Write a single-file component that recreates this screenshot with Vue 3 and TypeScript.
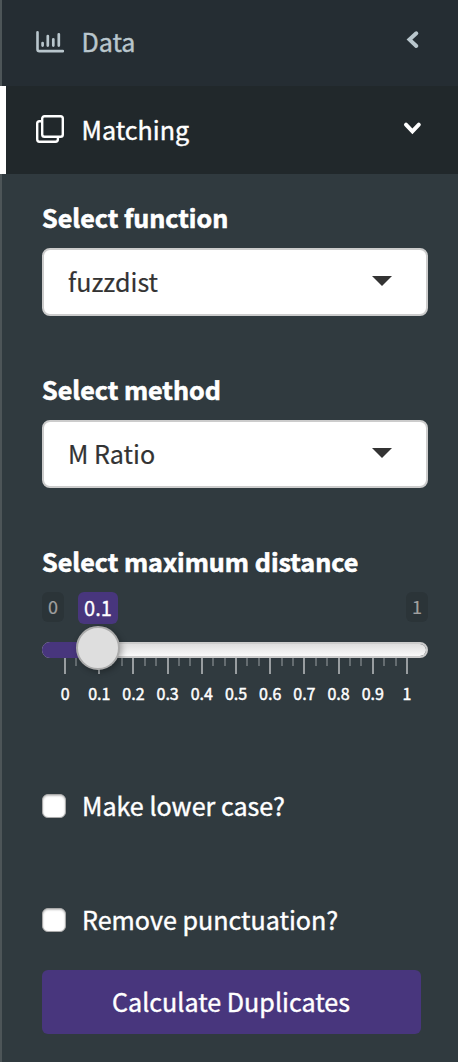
<script setup lang="ts">
import { ref } from 'vue'

interface Tick { x: number; major: boolean }

const selects = [
  { label: 'Select function', value: 'fuzzdist' },
  { label: 'Select method', value: 'M Ratio' },
]
const ticks: Tick[] = Array.from({ length: 31 }, (_, i) => ({
  x: Math.round(22 + i * 11.4),
  major: i % 3 === 0,
}))
const scale = ['0', '0.1', '0.2', '0.3', '0.4', '0.5', '0.6', '0.7', '0.8', '0.9', '1']
const checks = ref([
  { label: 'Make lower case?', on: false },
  { label: 'Remove punctuation?', on: false },
])
</script>

<template>
  <aside class="sidebar">
    <div class="item">
      <svg class="icon" width="28" height="28" viewBox="0 0 28 28" fill="none" stroke="currentColor" stroke-linecap="round">
        <path d="M1.5 3.2V20.2Q1.5 22.1 3.4 22.1H27" stroke-width="2.6" />
        <path d="M6.6 14V16.6M11.8 7V16.6M17.3 10.3V16.6M22.8 5.3V16.6" stroke-width="2.7" />
      </svg>
      <span class="title">Data</span>
      <svg class="arrow" width="20" height="20" viewBox="0 0 20 20" fill="none" stroke="currentColor" stroke-width="4" stroke-linecap="round">
        <path d="M13.3 3.3L6.5 9.6L13.3 16" />
      </svg>
    </div>
    <div class="item active">
      <svg class="icon" width="28" height="28" viewBox="0 0 28 28" fill="none" stroke="currentColor" stroke-width="2.4">
        <rect x="6.2" y="1.2" width="20.6" height="20.6" rx="2.3" />
        <path d="M6 6.3H3.4Q1.2 6.3 1.2 8.6V24.3Q1.2 26.8 3.4 26.8H19.4Q21.9 26.8 21.9 24.3V22" />
      </svg>
      <span class="title">Matching</span>
      <svg class="arrow" width="20" height="20" viewBox="0 0 20 20" fill="none" stroke="currentColor" stroke-width="4" stroke-linecap="round">
        <path d="M3 6.7L9.4 13.3L15.8 6.7" />
      </svg>
    </div>

    <div class="panel">
      <div v-for="s in selects" :key="s.label" class="group">
        <div class="label">{{ s.label }}</div>
        <div class="select">
          <span>{{ s.value }}</span>
          <svg width="20" height="10" viewBox="0 0 20 10"><path d="M0 0H20L10 10Z" fill="#333" /></svg>
        </div>
      </div>

      <div class="label">Select maximum distance</div>
      <div class="slider">
        <div class="values">
          <span class="bound">0</span>
          <span class="current">0.1</span>
          <span class="bound last">1</span>
        </div>
        <div class="track">
          <div class="fill"></div>
          <div class="handle"></div>
        </div>
        <svg class="ticks" width="386" height="16">
          <rect v-for="t in ticks" :key="t.x" :x="t.x" y="0" :width="2" :height="t.major ? 16 : 8" :class="{ minor: !t.major }" />
        </svg>
        <div class="scale"><span v-for="n in scale" :key="n">{{ n }}</span></div>
      </div>

      <label v-for="c in checks" :key="c.label" class="check">
        <input v-model="c.on" type="checkbox" />
        <span>{{ c.label }}</span>
      </label>
      <button class="calculate" type="button">Calculate Duplicates</button>
    </div>
  </aside>
</template>

<style>
body { margin: 0; background: #303a3f; }
</style>

<style scoped>
* { box-sizing: border-box; }
.sidebar {
  width: 458px;
  height: 1062px;
  overflow: hidden;
  background: linear-gradient(90deg, #4d5558 2px, #303a3f 2px);
  color: #fff;
  font: 25.1px/40px "Noto Sans CJK SC", "Noto Sans", sans-serif;
}
.item {
  display: flex;
  align-items: center;
  height: 86px;
  margin-left: 2px;
  padding: 0 35px 0 34px;
  background: #252d33;
  color: #b9c6cd;
  -webkit-text-stroke: 0.4px currentColor;
}
.item.active {
  height: 88px;
  margin-left: 0;
  padding-left: 30px;
  border-left: 6px solid #fff;
  background: #21282b;
  color: #fff;
}
.title { margin: 0 0 4px 17.5px; }
.active .title { margin-bottom: 2px; }
.arrow { margin-left: auto; margin-bottom: 6px; }
.active .arrow { margin-bottom: 4px; }
.active .icon { margin-bottom: 2px; }
.panel { padding: 24px 30px 0 42px; }
.group { height: 172px; }
.label {
  height: 40px;
  line-height: 38px;
  font-weight: 700;
  -webkit-text-stroke: 0.6px currentColor;
}
.select {
  display: flex;
  align-items: center;
  justify-content: space-between;
  width: 386px;
  height: 68px;
  margin-top: 10px;
  padding: 0 34px 2px 24px;
  border: 2px solid #ccc;
  border-radius: 8px;
  background: #fff;
  color: #333;
  -webkit-text-stroke: 0.2px currentColor;
}
.slider { width: 386px; height: 204px; padding-top: 10px; }
.values { display: flex; align-items: flex-start; height: 50px; }
.bound {
  width: 22px;
  height: 30px;
  border-radius: 6px;
  background: #2b3438;
  color: #a0a0a0;
  font-size: 18px;
  line-height: 28px;
  text-align: center;
  -webkit-text-stroke: 0.2px currentColor;
}
.current {
  width: 40px;
  height: 32px;
  margin-left: 14px;
  border-radius: 6px;
  background: #48367d;
  font-size: 20px;
  line-height: 32px;
  text-align: center;
  -webkit-text-stroke: 0.3px currentColor;
}
.last { margin-left: auto; }
.track {
  position: relative;
  height: 16px;
  border: 2px solid #ccc;
  border-radius: 8px;
  background: linear-gradient(#dedede, #fafafa);
  background-clip: padding-box;
}
.fill {
  width: 56px;
  height: 16px;
  margin: -2px;
  border-radius: 8px 0 0 8px;
  background: #48367d;
}
.handle {
  position: absolute;
  left: 32px;
  top: -18px;
  width: 44px;
  height: 44px;
  border: 2px solid #ababab;
  border-radius: 50%;
  background: #dedede;
  box-shadow: 2px 2px 6px rgba(0, 0, 0, 0.3);
}
.ticks { display: block; fill: #989da0; }
.minor { fill: #646c70; }
.scale {
  display: flex;
  width: 376px;
  margin-left: 6px;
  font-size: 16px;
  line-height: 38px;
}
.scale span { flex: 0 0 34.2px; text-align: center; -webkit-text-stroke: 0.45px currentColor; }
.check {
  display: flex;
  align-items: center;
  height: 40px;
  margin-bottom: 74px;
  -webkit-text-stroke: 0.4px currentColor;
}
.check span { margin-bottom: 2px; }
.check + .check { margin-bottom: 30px; }
.check input {
  appearance: none;
  width: 24px;
  height: 24px;
  margin: 0 16px 0 0;
  border: 1px solid #aaa;
  border-radius: 6px;
  background: #fff;
  box-shadow: inset 0 1px 2px rgba(0, 0, 0, 0.25);
}
.calculate {
  display: block;
  width: 379px;
  height: 64px;
  padding: 0 1px 2px 0;
  border: 0;
  border-radius: 6px;
  background: #48367d;
  color: #fff;
  font: inherit;
  -webkit-text-stroke: 0.4px currentColor;
}
</style>
